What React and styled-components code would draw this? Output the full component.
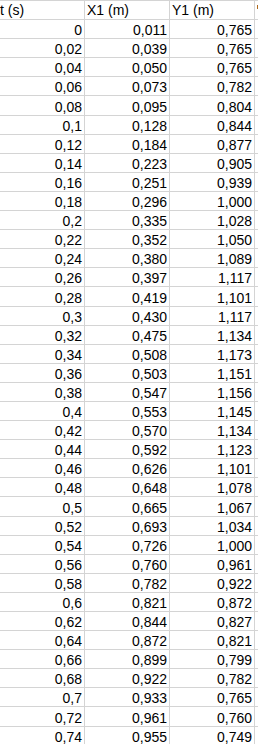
import React from 'react';
import styled, { createGlobalStyle } from 'styled-components';

const GlobalStyle = createGlobalStyle`
    html, body {
        margin: 0;
        padding: 0;
        background: #fff;
        overflow: hidden;
    }
`;

const rows = [
    ['0', '0,011', '0,765'],
    ['0,02', '0,039', '0,765'],
    ['0,04', '0,050', '0,765'],
    ['0,06', '0,073', '0,782'],
    ['0,08', '0,095', '0,804'],
    ['0,1', '0,128', '0,844'],
    ['0,12', '0,184', '0,877'],
    ['0,14', '0,223', '0,905'],
    ['0,16', '0,251', '0,939'],
    ['0,18', '0,296', '1,000'],
    ['0,2', '0,335', '1,028'],
    ['0,22', '0,352', '1,050'],
    ['0,24', '0,380', '1,089'],
    ['0,26', '0,397', '1,117'],
    ['0,28', '0,419', '1,101'],
    ['0,3', '0,430', '1,117'],
    ['0,32', '0,475', '1,134'],
    ['0,34', '0,508', '1,173'],
    ['0,36', '0,503', '1,151'],
    ['0,38', '0,547', '1,156'],
    ['0,4', '0,553', '1,145'],
    ['0,42', '0,570', '1,134'],
    ['0,44', '0,592', '1,123'],
    ['0,46', '0,626', '1,101'],
    ['0,48', '0,648', '1,078'],
    ['0,5', '0,665', '1,067'],
    ['0,52', '0,693', '1,034'],
    ['0,54', '0,726', '1,000'],
    ['0,56', '0,760', '0,961'],
    ['0,58', '0,782', '0,922'],
    ['0,6', '0,821', '0,872'],
    ['0,62', '0,844', '0,827'],
    ['0,64', '0,872', '0,821'],
    ['0,66', '0,899', '0,799'],
    ['0,68', '0,922', '0,782'],
    ['0,7', '0,933', '0,765'],
    ['0,72', '0,961', '0,760'],
    ['0,74', '0,955', '0,749'],
];

const App = () => {
    return (
        <>
            <GlobalStyle />
            <Sheet>
                <Row>
                    <Cell>t (s)</Cell>
                    <Cell>X1 (m)</Cell>
                    <Cell>Y1 (m)</Cell>
                    <Cell $next>
                        {/* sliver of the next, off-screen header */}
                        <Sliver />
                    </Cell>
                </Row>
                {rows.map((r, i) => (
                    <Row key={i}>
                        <Cell $num>{r[0]}</Cell>
                        <Cell $num>{r[1]}</Cell>
                        <Cell $num>{r[2]}</Cell>
                        <Cell $next />
                    </Row>
                ))}
            </Sheet>
        </>
    );
};

export default App;

const Sheet = styled.div`
    display: flex;
    flex-direction: column;
    width: 300px;
    margin-left: -2px;
    border-top: 1px solid #d4d4d4;
    font-family: "Liberation Sans", Arial, sans-serif;
    font-size: 14px;
    color: #000;
`;

const Row = styled.div`
    display: grid;
    grid-template-columns: 87px 85px 85px 1fr;
    height: 19.1px;
    flex-shrink: 0;
`;

const Cell = styled.div`
    box-sizing: border-box;
    display: flex;
    align-items: flex-end;
    justify-content: ${(p) => (p.$num ? 'flex-end' : 'flex-start')};
    padding: 0 2px 0 2px;
    line-height: 16px;
    white-space: nowrap;
    overflow: hidden;
    border-bottom: 1px solid #d4d4d4;
    border-right: ${(p) => (p.$next ? 'none' : '1px solid #d4d4d4')};
    padding-bottom: ${(p) => (p.$num ? '0' : '1px')};
`;

const Sliver = styled.span`
    display: block;
    align-self: flex-start;
    width: 1px;
    height: 4px;
    margin: 4px 0 0 0;
    background: #b06a1c;
`;
